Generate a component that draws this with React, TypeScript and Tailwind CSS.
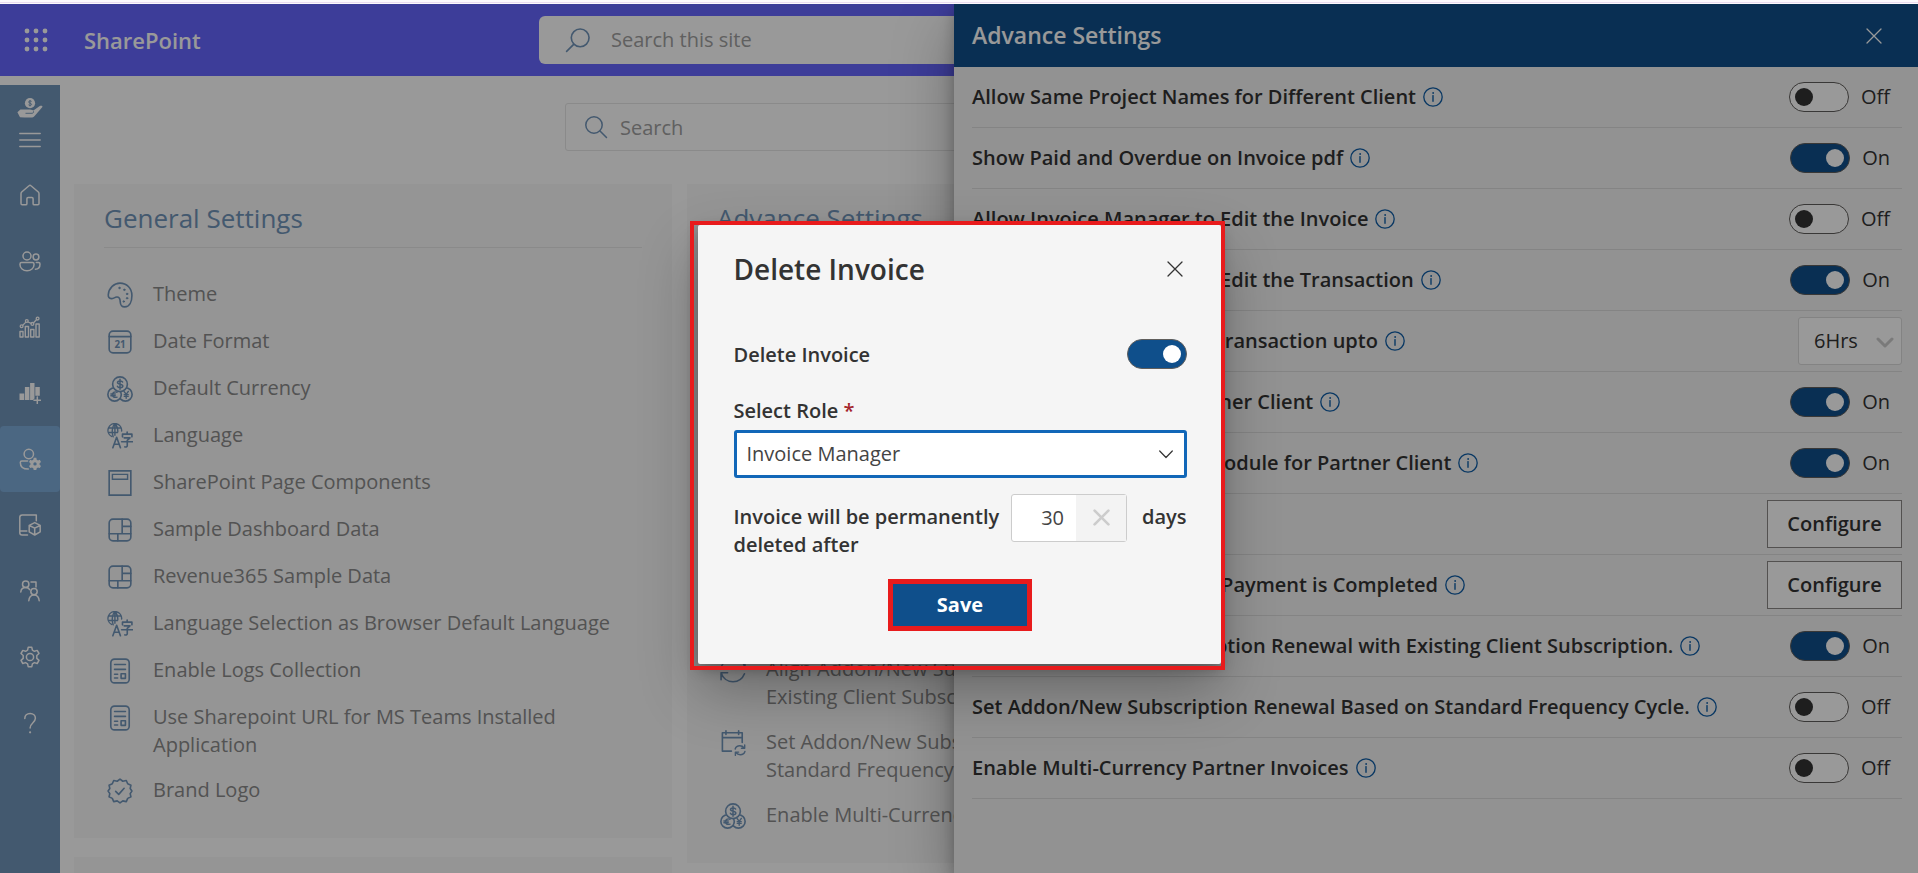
import React from "react";

type IconProps = { className?: string };

const stroke = {
  fill: "none",
  stroke: "currentColor",
  strokeWidth: 1.5,
  strokeLinecap: "round" as const,
  strokeLinejoin: "round" as const,
};

function Waffle() {
  return (
    <svg viewBox="0 0 24 24" className="h-6 w-6" fill="currentColor" aria-hidden="true">
      {[3, 12, 21].map((y) => [3, 12, 21].map((x) => <circle key={`${x}-${y}`} cx={x} cy={y} r="2.4" />))}
    </svg>
  );
}

function Magnifier({ className }: IconProps) {
  return (
    <svg viewBox="0 0 24 24" className={className} {...stroke} aria-hidden="true">
      <circle cx="10" cy="10" r="8.2" />
      <path d="M16 16l6.5 6.5" />
    </svg>
  );
}

function Close({ className }: IconProps) {
  return (
    <svg viewBox="0 0 16 16" className={className} {...stroke} strokeWidth="1.3" aria-hidden="true">
      <path d="M1 1l14 14M15 1L1 15" />
    </svg>
  );
}

function Info() {
  return (
    <svg viewBox="0 0 20 20" className="h-5 w-5 shrink-0 text-[#0f5da6]" {...stroke} aria-hidden="true">
      <circle cx="10" cy="10" r="9.2" strokeWidth="1.3" />
      <path d="M10 8.6v5.6" strokeWidth="1.4" />
      <circle cx="10" cy="6" r="0.5" strokeWidth="0.9" />
    </svg>
  );
}

/* Sidebar icons */

function HandCoin() {
  return (
    <svg viewBox="0 0 26 20" className="h-5 w-[26px]" aria-hidden="true">
      <circle cx="13" cy="5.2" r="5.1" fill="currentColor" />
      <path
        d="M14.6 3.4c-.5-.6-3-.8-3 .6 0 1.500 3 .9 3 2.400 0 1.300-2.500 1.200-3.100.4M13 2v6.400"
        fill="none"
        stroke="#7194b9"
        strokeWidth="0.9"
      />
      <path
        d="M.4 14.200l3-2.600h8.200c1.800 0 3.200.5 4.800.8l6-4.200c1.700-1 3.400-.4 3 .8L17.600 18c-1 1.200-2 1.600-3.600 1.600H7.400L3 19.200z"
        fill="currentColor"
      />
      <path d="M8.500 15.300h6.500c1 0 1.800-.8 1.500-2" fill="none" stroke="#7194b9" strokeWidth="0.9" />
    </svg>
  );
}

function Menu() {
  return (
    <svg viewBox="0 0 22 16" className="h-4 w-[22px]" {...stroke} aria-hidden="true">
      <path d="M.8 1.500h20.400M.8 8h20.400M.8 14.500h20.400" />
    </svg>
  );
}

function Home() {
  return (
    <path d="M2 9.700c0-.7.200-1.200.7-1.700L10 1.700c.6-.6 1.400-.6 2 0L19.300 8c.5.5.7 1 .7 1.700v9.800c0 .8-.5 1.300-1.200 1.300h-3.600c-.7 0-1.100-.4-1.100-1.100v-5c0-.8-.5-1.300-1.200-1.300H9.100c-.7 0-1.200.5-1.200 1.300v5c0 .7-.4 1.100-1.100 1.100H3.200c-.7 0-1.200-.5-1.200-1.300z" />
  );
}

function People() {
  return (
    <>
      <circle cx="8" cy="6" r="4" />
      <circle cx="17" cy="7" r="2.900" />
      <path d="M1 14c0-.9.600-1.500 1.500-1.500h11c.9 0 1.500.6 1.500 1.500v.8c0 3.400-3 5.900-7 5.900s-7-2.500-7-5.900z" />
      <path d="M17.300 12.500h2.200c.9 0 1.500.6 1.500 1.500 0 3.200-2 5.200-4.600 5.200" />
    </>
  );
}

function ChartTrend() {
  return (
    <>
      <path d="M1 21v-5.500h3V21zM6.300 21V10.500h3.200V21zM11.700 21v-7.500h3.200V21zM17 21V8h3.200v13z" strokeWidth="1.400" />
      <path d="M3.800 9.200l2.800-2.800M9 6l3.200 1.300M14.600 6.800l2.800-3" strokeWidth="1.300" />
      <circle cx="2.600" cy="10.300" r="1.400" strokeWidth="1.300" />
      <circle cx="7.800" cy="5" r="1.400" strokeWidth="1.300" />
      <circle cx="13.400" cy="7.900" r="1.400" strokeWidth="1.300" />
      <circle cx="18.600" cy="2.600" r="1.400" strokeWidth="1.300" />
    </>
  );
}

function BarsPlus() {
  return (
    <>
      <path
        d="M.5 11.500h4.700V18H.5zM5.900 5h4.500v13H5.900zM11.100 1h4.400v15.500l-1.500 1.500h-2.900zM16.300 5h4.500v8.800h-4.500z"
        fill="currentColor"
        stroke="none"
      />
      <path d="M18.300 15v6.600M15 18.300h6.600" />
    </>
  );
}

function UserGear() {
  return (
    <>
      <circle cx="9.800" cy="6" r="4.700" />
      <path d="M8.600 13H2.800c-.9 0-1.500.6-1.500 1.400 0 4 3 6.600 8 6.600" />
      <path
        fillRule="evenodd"
        stroke="none"
        fill="currentColor"
        d="M14.700 9.800h2.600l.4 1.900 1.300.7 1.800-.6 1.200 2.200-1.400 1.200v1.500l1.400 1.200-1.200 2.200-1.800-.6-1.300.7-.4 1.800h-2.600l-.4-1.800-1.300-.7-1.800.6L10 17.900l1.400-1.200v-1.500L10 14l1.200-2.200 1.800.6 1.300-.7zM16 14.200a1.700 1.700 0 100 3.400 1.700 1.700 0 000-3.400z"
      />
    </>
  );
}

function BookCube() {
  return (
    <>
      <path d="M17.300 6.800V1H3.300C1.700 1 .8 1.900.8 3.300v15.400c0 1.400.9 2.300 2.300 2.300H8.500M1 17h6.800" />
      <path d="M15.700 8.600l5.500 2.700v6.500L15.700 21l-5.500-3.200v-6.500zM10.400 11.500l5.300 2.700 5.300-2.700M15.700 14.400v6.300" />
    </>
  );
}

function PeopleSwap() {
  return (
    <>
      <circle cx="6.700" cy="4.300" r="3.200" />
      <circle cx="15" cy="11.600" r="3.200" />
      <path d="M1.800 12c.3-2.900 2-4.400 4.900-4.400 1.900 0 3.200.7 4 2M9.800 20.800c.3-3.600 2-5.900 5.200-5.900s4.900 2.300 5.200 5.900M12 2h5v5" />
    </>
  );
}

function Gear() {
  return (
    <>
      <circle cx="11" cy="11" r="3.600" />
      <path d="M9.200 1.300h3.600l.6 2.900 2 1.100 2.800-.9 1.800 3.100-2.200 2v2.900l2.200 2-1.800 3.100-2.800-.9-2 1.200-.6 2.900H9.200l-.6-2.900-2-1.200-2.800.9L2 14.400l2.200-2V9.500L2 7.500l1.800-3.100 2.800.9 2-1.100z" />
    </>
  );
}

function Question() {
  return (
    <>
      <path d="M5.800 6.500c0-3 2.200-5 5.300-5s5.300 2 5.300 4.800c0 4.300-5.300 4.600-5.300 9.700" />
      <circle cx="11.100" cy="20.300" r="0.500" strokeWidth="1.200" />
    </>
  );
}

const navItems = [
  { name: "Home", icon: <Home /> },
  { name: "Clients", icon: <People /> },
  { name: "Analytics", icon: <ChartTrend /> },
  { name: "Reports", icon: <BarsPlus /> },
  { name: "User settings", icon: <UserGear />, active: true },
  { name: "Products", icon: <BookCube /> },
  { name: "Partners", icon: <PeopleSwap /> },
  { name: "Settings", icon: <Gear /> },
  { name: "Help", icon: <Question /> },
];

/* Settings list icons */

const palette = (
  <>
    <path d="M12 1c6 0 11 4.600 11 11.500 0 6-2.300 10.500-6.600 10.500-4.900 0-3.900-4.100-4.400-6.500-.4-2-1.500-2.800-3-2.600-2 .3-3 1.500-5 1.500-2 0-3-1.500-2.800-3.700C1.700 5.600 6.500 1 12 1z" />
    {[
      [11.500, 5.500],
      [16, 7.200],
      [18.500, 11],
      [18.500, 15],
      [15.500, 18],
    ].map(([x, y]) => (
      <circle key={`${x}${y}`} cx={x} cy={y} r="0.700" fill="currentColor" strokeWidth="0.800" />
    ))}
  </>
);

const calendar = (
  <>
    <rect x="2" y="2" width="20" height="20" rx="3.500" />
    <path d="M2 7h20" />
    <text x="12" y="17.700" textAnchor="middle" fontSize="9" fontWeight="700" fill="currentColor" stroke="none">
      21
    </text>
  </>
);

const coins = (
  <>
    <circle cx="17" cy="17" r="6.200" fill="#f8f8f8" />
    <circle cx="7" cy="17" r="6.200" fill="#f8f8f8" />
    <circle cx="12" cy="7.600" r="6.800" fill="#f8f8f8" />
    <path d="M14.400 5.600c-.6-1.500-4.700-1.500-4.700.4 0 2.300 4.900 1 4.900 3.300 0 2-4.300 2-5 .2M12 3v9.200" strokeWidth="1.400" />
    <path d="M9.300 15c-2.600-1-4.300.4-4.300 2.300s1.700 3 4.300 2.200M3.600 16.600h4M3.600 18.300h4" strokeWidth="1.300" />
    <path d="M15.700 14.200l2 2.700 2-2.700M17.700 16.900v3.600M15.900 17.200h3.700M15.900 18.800h3.700" strokeWidth="1.300" />
  </>
);

const language = (
  <>
    <path
      d="M4.200 12.400A6.300 6.300 0 1113.500 7.400M7.300.8C4.500 3.500 4.300 9 5.700 12.800M7.300.8C9.200 2.600 10 5 10 7.800M1.800 4.600h11M1.200 8.800h8.600M7.300.8v10.500"
      strokeWidth="1.300"
    />
    <path d="M5.400 22.800l3.500-9.600 3.500 9.600M6.700 19.600h4.400" strokeWidth="1.500" />
    <path
      d="M14.300 12.800v-2.500h8.700v2.500M18.600 8.300v1.800M15.800 13.700h5.400L18.700 16v5c0 1-.8 1.300-2.200 1.100M13.500 17.300H23.500"
      strokeWidth="1.500"
    />
  </>
);

const pageLayout = (
  <>
    <path d="M2 .8h20v22.400H2z" strokeLinejoin="miter" />
    <path d="M5 4h14v4.500H5z" strokeWidth="1.300" strokeLinejoin="miter" />
  </>
);

const dashboard = (
  <>
    <rect x="2" y="2" width="20" height="20" rx="3.500" />
    <path d="M14 2v13.500M2 15.500h20M14 8.700h8M10 15.500V22" />
  </>
);

const logs = (
  <>
    <rect x="3.500" y="1" width="17" height="22" rx="3.500" />
    <path d="M7 6h10M7 10.500h10M7 15h2.800M7 18.500h2.800M13 14.500h4v4.300h-4z" />
  </>
);

const badge = (
  <>
    <path d="M12 1l2.600 2 3.200-.7 1.300 3 3 1.300-.7 3.100L23 12l-1.600 2.400.7 3-3 1.400-1.300 3-3.200-.7L12 23l-2.600-1.900-3.200.7-1.300-3-3-1.400.7-3L1 12l1.600-2.300-.7-3.100 3-1.300 1.300-3 3.200.7z" />
    <path d="M8 12.300l2.800 2.800 5-5.600" />
  </>
);

const sync = (
  <>
    <path d="M1 14.500c1.500 4.800 5.600 8.300 11 8.300 4.800 0 8.700-2.600 10.600-7.300M1 21v-6.500h6M23 9.500C21.500 4.700 17.400 1.200 12 1.200 7.200 1.200 3.300 3.800 1.400 8.500M23 3v6.500h-6" />
  </>
);

const calendarSync = (
  <>
    <path d="M10.500 19.500H2.200V2.500h18.300v9M2.200 7h18.300M5.500.8v3.400M17.200.8v3.400" />
    <path d="M14 17.500c.6-2 2.200-3 4.300-3 1.700 0 3 .7 4 2M22.800 13.800v3h-3M23 19.800c-.6 2-2.200 3-4.300 3-1.700 0-3-.7-4-2M14.200 23.400v-3h3" strokeWidth="1.300" />
  </>
);

type Item = { icon: React.ReactNode; label: React.ReactNode };

const generalItems: Item[] = [
  { icon: palette, label: "Theme" },
  { icon: calendar, label: "Date Format" },
  { icon: coins, label: "Default Currency" },
  { icon: language, label: "Language" },
  { icon: pageLayout, label: "SharePoint Page Components" },
  { icon: dashboard, label: "Sample Dashboard Data" },
  { icon: dashboard, label: "Revenue365 Sample Data" },
  { icon: language, label: "Language Selection as Browser Default Language" },
  { icon: logs, label: "Enable Logs Collection" },
  { icon: logs, label: "Use Sharepoint URL for MS Teams Installed Application" },
  { icon: badge, label: "Brand Logo" },
];

const advanceItems: Item[] = [
  {
    icon: sync,
    label: (
      <>
        Align Addon/New Subscription Renewal with
        <br />
        Existing Client Subscription.
      </>
    ),
  },
  {
    icon: calendarSync,
    label: (
      <>
        Set Addon/New Subscription Renewal Based on
        <br />
        Standard Frequency Cycle.
      </>
    ),
  },
  { icon: coins, label: "Enable Multi-Currency Partner Invoices" },
];

function SettingsCard({ title, items, listClass }: { title: string; items: Item[]; listClass: string }) {
  return (
    <section className="bg-[#f8f8f8] px-[30px] pt-4 pb-8">
      <h2 className="border-b border-[#e6e6e6] pb-[11px] text-[26px] leading-9 text-[#7194b9]">{title}</h2>
      <ul className={listClass}>
        {items.map((item, i) => (
          <li key={i}>
            <a href="#" className="flex min-h-[30px] items-start gap-5 pl-[3px] text-[#8a8a8a]">
              <span className="flex h-[30px] shrink-0 items-center text-[#7194b9]">
                <svg viewBox="0 0 24 24" className="h-[26px] w-[26px]" {...stroke} aria-hidden="true">
                  {item.icon}
                </svg>
              </span>
              <span className="leading-7">{item.label}</span>
            </a>
          </li>
        ))}
      </ul>
    </section>
  );
}

function Toggle({ id, on, label }: { id: string; on: boolean; label?: string }) {
  return (
    <input
      id={id}
      type="checkbox"
      role="switch"
      aria-label={label}
      defaultChecked={on}
      className="flex h-[30px] w-[60px] shrink-0 appearance-none items-center rounded-full border border-[#605e5c] bg-white px-[5px] before:h-[18px] before:w-[18px] before:rounded-full before:bg-[#333333] checked:justify-end checked:bg-[#0f4f8b] checked:before:bg-white"
    />
  );
}

type Row = { label: string; info: boolean; kind: "on" | "off" | "select" | "button" };

const rows: Row[] = [
  { label: "Allow Same Project Names for Different Client", info: true, kind: "off" },
  { label: "Show Paid and Overdue on Invoice pdf", info: true, kind: "on" },
  { label: "Allow Invoice Manager to Edit the Invoice", info: true, kind: "off" },
  { label: "Allow Invoice Manager to Edit the Transaction", info: true, kind: "on" },
  { label: "Allow Partner to Edit the Transaction upto", info: true, kind: "select" },
  { label: "Show Statements for Partner Client", info: true, kind: "on" },
  { label: "Enable the Subscription Module for Partner Client", info: true, kind: "on" },
  { label: "Delete Invoice", info: false, kind: "button" },
  { label: "Send Email to Client once Payment is Completed", info: true, kind: "button" },
  { label: "Align Addon/New Subscription Renewal with Existing Client Subscription.", info: true, kind: "on" },
  { label: "Set Addon/New Subscription Renewal Based on Standard Frequency Cycle.", info: true, kind: "off" },
  { label: "Enable Multi-Currency Partner Invoices", info: true, kind: "off" },
];

function RowControl({ row, id }: { row: Row; id: string }) {
  if (row.kind === "select") {
    return (
      <div className="relative">
        <select
          id={id}
          className="h-12 w-[104px] appearance-none rounded-[3px] border border-[#dadada] bg-white pl-[15px] text-[#333333]"
        >
          <option>6Hrs</option>
        </select>
        <svg
          viewBox="0 0 18 11"
          className="pointer-events-none absolute top-5 right-2 h-[11px] w-[18px] text-[#cccccc]"
          {...stroke}
          strokeWidth="3"
          aria-hidden="true"
        >
          <path d="M2 2l7 7 7-7" />
        </svg>
      </div>
    );
  }
  if (row.kind === "button") {
    return (
      <button id={id} type="button" className="h-12 w-[135px] border border-[#8a8886] bg-white font-semibold text-[#333333]">
        Configure
      </button>
    );
  }
  return (
    <div className="flex items-center gap-3 pr-3">
      <Toggle id={id} on={row.kind === "on"} />
      <span>{row.kind === "on" ? "On" : "Off"}</span>
    </div>
  );
}

function Drawer() {
  return (
    <aside className="absolute inset-y-0 right-0 flex w-[964px] flex-col bg-[#f3f3f3] text-[#333333] shadow-[0_26px_58px_rgba(0,0,0,0.3),0_5px_14px_rgba(0,0,0,0.25)]">
      <header className="flex h-[63px] shrink-0 items-center justify-between bg-[#0f4f8b] pr-9 pl-[18px] text-white">
        <h2 className="pb-0.5 text-[23px] leading-8 font-semibold">Advance Settings</h2>
        <button type="button" aria-label="Close panel">
          <Close className="h-4 w-4" />
        </button>
      </header>
      <div className="pr-4 pl-[18px]">
        {rows.map((row, i) => (
          <div key={row.label} className="flex h-[61px] items-center justify-between border-b border-[#dcdcdc]">
            <div className="flex items-center gap-[7px]">
              <label htmlFor={`setting-${i}`} className="font-semibold">
                {row.label}
              </label>
              {row.info && <Info />}
            </div>
            <RowControl row={row} id={`setting-${i}`} />
          </div>
        ))}
      </div>
    </aside>
  );
}

function DeleteDialog() {
  return (
    <div
      role="dialog"
      aria-labelledby="dialog-title"
      className="relative w-[523px] rounded-[2px] bg-[#f5f5f5] pt-6 pr-[34px] pb-[33px] pl-9 text-[#333333] shadow-[0_26px_58px_rgba(0,0,0,0.3),0_5px_14px_rgba(0,0,0,0.25)]"
    >
      <div className="flex h-10 items-center justify-between pr-1">
        <h2 id="dialog-title" className="text-[28px] leading-10 font-semibold">
          Delete Invoice
        </h2>
        <button type="button" aria-label="Close dialog">
          <Close className="h-4 w-4" />
        </button>
      </div>

      <div className="mt-[50px] flex h-[30px] items-center justify-between">
        <label htmlFor="delete-toggle" className="pt-0.5 font-semibold">
          Delete Invoice
        </label>
        <Toggle id="delete-toggle" on />
      </div>

      <label htmlFor="role" className="mt-[28px] block leading-7 font-semibold">
        Select Role <span className="text-[#a4262c]">*</span>
      </label>
      <div className="relative mt-[5px]">
        <select
          id="role"
          className="block h-12 w-full appearance-none rounded-[3px] border-3 border-[#1267b8] bg-white pl-[10px] text-[#444444]"
        >
          <option>Invoice Manager</option>
        </select>
        <svg
          viewBox="0 0 14 9"
          className="pointer-events-none absolute top-5 right-[14px] h-[9px] w-[14px]"
          {...stroke}
          strokeWidth="1.200"
          aria-hidden="true"
        >
          <path d="M.7 1l6.300 6.500L13.300 1" />
        </svg>
      </div>

      <div className="mt-4 flex items-start font-semibold">
        <label htmlFor="days" className="flex-1 pt-[9px] leading-7">
          Invoice will be permanently
          <br />
          deleted after
        </label>
        <div className="mr-[15px] flex h-12 w-[116px] shrink-0 rounded-[3px] border border-[#cccccc] bg-white">
          <input id="days" defaultValue="30" className="w-16 min-w-0 pr-3 text-right font-normal text-[#444444]" />
          <button
            type="button"
            aria-label="Clear days"
            className="flex flex-1 items-center justify-center bg-[#f3f3f3] text-[#cccccc]"
          >
            <svg viewBox="0 0 16 16" className="h-[17px] w-[17px]" {...stroke} strokeWidth="2.500" aria-hidden="true">
              <path d="M1.500 1.500l13 13M14.500 1.500l-13 13" />
            </svg>
          </button>
        </div>
        <span className="pt-[9px] leading-7">days</span>
      </div>

      <div className="mt-5 flex justify-center">
        <button type="button" className="h-[52px] w-36 border-5 border-[#e81b1c] bg-[#0f4f8b] font-bold text-white">
          Save
        </button>
      </div>

      <div className="pointer-events-none absolute -top-1 -right-1 -bottom-[6px] -left-2 border-4 border-[#e81b1c]" />
    </div>
  );
}

export default function App() {
  return (
    <div className="flex h-screen flex-col overflow-hidden bg-white font-['Open_Sans','Noto_Sans',sans-serif] text-[20px] leading-7">
      <div className="flex h-1 shrink-0 flex-col justify-center bg-[#fcf9fd]">
        <div className="h-px bg-[#eadcf0]" />
      </div>

      <div className="relative flex min-h-0 flex-1 flex-col overflow-hidden">
        <header className="flex h-[72px] shrink-0 items-center bg-[#6666ff] pl-6 text-white">
          <div className="flex flex-1 items-center gap-9">
            <button type="button" aria-label="App launcher">
              <Waffle />
            </button>
            <a href="#" className="text-[22px] leading-8 font-semibold">
              SharePoint
            </a>
          </div>
          <label className="flex h-12 w-[840px] items-center gap-5 rounded-md bg-white pl-[26px]">
            <Magnifier className="h-[26px] w-[26px] -scale-x-100 text-[#7194b9]" />
            <input
              type="text"
              placeholder="Search this site"
              aria-label="Search this site"
              className="flex-1 placeholder:text-[#a0a0a0]"
            />
          </label>
          <div className="flex-1 pr-6" />
        </header>

        <div className="flex min-h-0 flex-1">
          <nav className="mt-[9px] flex w-[60px] shrink-0 flex-col items-center bg-[#7194b9] pt-[13px] text-white">
            <a href="#" aria-label="Revenue365">
              <HandCoin />
            </a>
            <button type="button" aria-label="Toggle menu" className="mt-3.5 mb-3.5">
              <Menu />
            </button>
            {navItems.map((item) => (
              <a
                key={item.name}
                href="#"
                aria-label={item.name}
                className={
                  item.active
                    ? "flex h-[66px] w-full shrink-0 items-center justify-center rounded bg-[#7eacd9]"
                    : "flex h-[66px] w-full shrink-0 items-center justify-center"
                }
              >
                <svg viewBox="0 0 22 22" className="h-[22px] w-[22px]" {...stroke}>
                  {item.icon}
                </svg>
              </a>
            ))}
          </nav>

          <main className="min-w-0 flex-1 pt-[27px]">
            <label className="mx-auto flex h-12 w-[848px] items-center gap-3 rounded-[3px] border border-[#e6e6e6] bg-white pl-[18px]">
              <Magnifier className="h-6 w-6 text-[#7194b9]" />
              <input
                type="text"
                placeholder="Search"
                aria-label="Search"
                className="flex-1 pt-0.5 placeholder:text-[#a0a0a0]"
              />
            </label>

            <div className="mt-[33px] grid grid-cols-3 items-start gap-[15px] pr-5 pl-[14px]">
              <div className="flex flex-col gap-[19px]">
                <SettingsCard
                  title="General Settings"
                  items={generalItems}
                  listClass="mt-8 flex flex-col gap-[17px]"
                />
                <div className="h-40 bg-[#f8f8f8]" />
              </div>
              <SettingsCard
                title="Advance Settings"
                items={advanceItems}
                listClass="mt-8 flex flex-col gap-[17px] pt-[375px]"
              />
            </div>
          </main>
        </div>

        <Drawer />

        <div className="absolute inset-0 flex items-center justify-center bg-black/40 pt-[11px]">
          <DeleteDialog />
        </div>
      </div>
    </div>
  );
}
